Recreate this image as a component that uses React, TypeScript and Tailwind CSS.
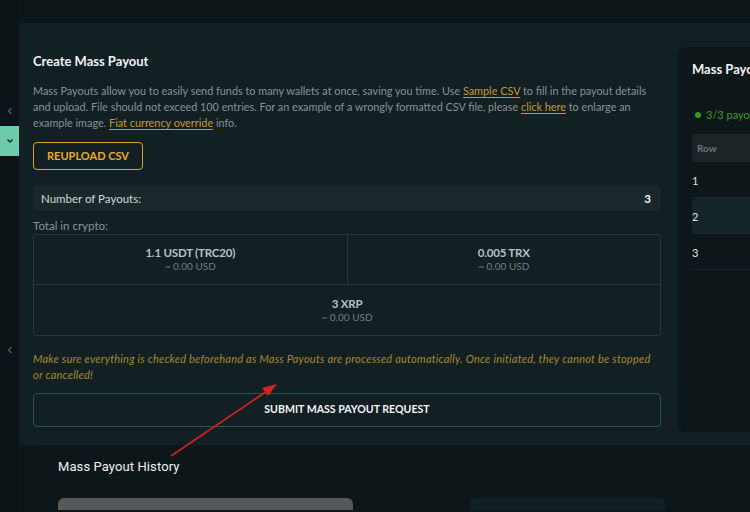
import React from 'react';

const ChevronLeft = () => (
  <svg width="6" height="8" viewBox="0 0 6 8" fill="none">
    <path d="M4.5 1L1.5 4l3 3" stroke="#55606a" strokeWidth="1.2" />
  </svg>
);

const ChevronDown = () => (
  <svg width="8" height="6" viewBox="0 0 8 6" fill="none">
    <path d="M1.5 1.5L4 4l2.5-2.5" stroke="#13302a" strokeWidth="1.5" />
  </svg>
);

const totals = [
  { amount: '1.1 USDT (TRC20)', fiat: '~ 0.00 USD' },
  { amount: '0.005 TRX', fiat: '~ 0.00 USD' },
];

const rows = ['1', '2', '3'];

export default function App() {
  return (
    <div
      className="relative w-[750px] h-[512px] overflow-hidden bg-[#0c1518] flex"
      style={{ fontFamily: 'Lato, "Noto Sans", sans-serif' }}
    >
      {/* Sidebar */}
      <aside className="w-[19px] shrink-0 bg-[#0a1316] flex flex-col">
        <div className="h-[105px]" />
        <div className="h-[12px] flex items-center justify-center">
          <ChevronLeft />
        </div>
        <div className="h-[9px]" />
        <div className="h-[30px] bg-[#6dcaab] flex items-center justify-center">
          <ChevronDown />
        </div>
        <div className="h-[188px]" />
        <div className="h-[12px] flex items-center justify-center">
          <ChevronLeft />
        </div>
      </aside>

      <div className="flex-1 flex flex-col pt-[23px]">
        {/* Main panel */}
        <section className="bg-[#121f23] flex pl-[14px] pt-[29px] pb-[18px] h-[422px]">
          <div className="w-[628px] shrink-0 flex flex-col">
            <h2 className="text-[13px] leading-[18px] font-bold text-[#f1f3f4]">Create Mass Payout</h2>
            <p className="mt-[13px] text-[10.85px] leading-[16px] text-[#899396] whitespace-nowrap">
              Mass Payouts allow you to easily send funds to many wallets at once, saving you time. Use{' '}
              <span className="text-[#c9992c] underline underline-offset-2">Sample CSV</span> to fill in the payout details
              <br />
              and upload. File should not exceed 100 entries. For an example of a wrongly formatted CSV file, please{' '}
              <span className="text-[#c9992c] underline underline-offset-2">click here</span> to enlarge an
              <br />
              example image. <span className="text-[#c9992c] underline underline-offset-2">Fiat currency override</span> info.
            </p>

            <button className="mt-[11px] w-[110px] h-[28px] rounded-[4px] border border-[#d6a223] text-[#e8ad22] text-[11px] font-bold">
              REUPLOAD CSV
            </button>

            <div className="mt-[16px] h-[26px] rounded-[4px] bg-[#1a272b] flex items-center justify-between px-[8px] text-[11.5px]">
              <span className="text-[#d3d8da]">Number of Payouts:</span>
              <span className="text-[#f4f6f7] font-bold pr-[2px]">3</span>
            </div>

            <div className="mt-[7px] text-[11.5px] leading-[16px] text-[#899396]">Total in crypto:</div>

            <div className="border border-[#2a393d] rounded-[3px] flex flex-col">
              <div className="flex h-[50px] border-b border-[#2a393d]">
                {totals.map((t, i) => (
                  <div
                    key={t.amount}
                    className={`flex-1 flex flex-col items-center justify-center ${i === 0 ? 'border-r border-[#2a393d]' : ''}`}
                  >
                    <span className="text-[11.5px] leading-[14px] font-bold text-[#b9c0c3] tracking-[-0.2px]">{t.amount}</span>
                    <span className="text-[10px] leading-[13px] text-[#727c80]">{t.fiat}</span>
                  </div>
                ))}
              </div>
              <div className="h-[50px] flex flex-col items-center justify-center">
                <span className="text-[11.5px] leading-[14px] font-bold text-[#b9c0c3] tracking-[-0.2px]">3 XRP</span>
                <span className="text-[10px] leading-[13px] text-[#727c80]">~ 0.00 USD</span>
              </div>
            </div>

            <p className="mt-[15px] text-[11px] leading-[16px] italic text-[#a9882a] whitespace-nowrap tracking-[0.22px]">
              Make sure everything is checked beforehand as Mass Payouts are processed automatically. Once initiated, they cannot be stopped
              <br />
              or cancelled!
            </p>

            <button className="mt-[10px] h-[34px] rounded-[4px] border border-[#2c5552] text-[#f2f4f5] text-[10.6px] font-bold">
              SUBMIT MASS PAYOUT REQUEST
            </button>
          </div>

          {/* Right panel */}
          <div className="ml-[17px] mt-[-5px] h-[385px] flex-1 bg-[#0d171a] rounded-l-[8px] pl-[14px] pt-[13px] overflow-hidden">
            <div className="text-[13px] leading-[18px] font-bold text-[#f1f3f4] whitespace-nowrap">Mass Payouts</div>
            <div className="mt-[29px] flex items-center gap-[5px] text-[11px] leading-[16px] text-[#3b9a22] whitespace-nowrap">
              <span className="w-[6px] h-[6px] rounded-full bg-[#3b9a22] ml-[3px]" />
              3/3 payouts
            </div>
            <div className="mt-[11px] h-[28px] bg-[#1b2427] flex items-center pl-[5px] text-[10px] font-bold text-[#6f777a]">Row</div>
            {rows.map((r, i) => (
              <div
                key={r}
                className={`h-[36px] flex items-center pt-[3px] text-[11px] text-[#dfe4e6] border-b border-[#18252a] ${i === 1 ? 'bg-[#142428]' : ''}`}
              >
                {r}
              </div>
            ))}
          </div>
        </section>

        {/* History panel */}
        <section className="ml-[14px] flex-1 bg-[#0d171a] rounded-tl-[6px] pl-[25px] pt-[13px]">
          <h3
            className="text-[13px] leading-[17px] text-[#eef1f2] tracking-[0.1px]"
            style={{ fontFamily: 'Roboto, sans-serif' }}
          >
            Mass Payout History
          </h3>
          <div className="mt-[23px] flex">
            <div className="w-[295px] h-[12px] rounded-t-[6px] bg-[#565859]" />
            <div className="ml-[117px] w-[195px] h-[12px] rounded-t-[6px] bg-[#112026]" />
          </div>
        </section>
      </div>

      {/* Annotation arrow */}
      <svg className="absolute left-0 top-0 pointer-events-none" width="750" height="512">
        <line x1="171" y1="456" x2="270" y2="389" stroke="#d61f1f" strokeWidth="1.6" />
        <polygon points="277,384 262,388 268,396" fill="#d61f1f" />
      </svg>
    </div>
  );
}
